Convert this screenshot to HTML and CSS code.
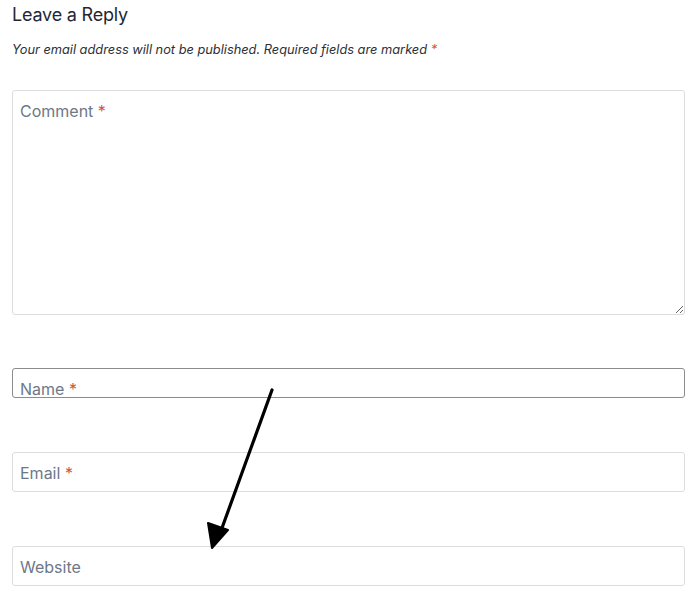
FILE: index.html
```html
<!DOCTYPE html>
<html lang="en">

<head>
    <meta charset="UTF-8">
    <meta name="viewport" content="width=device-width, initial-scale=1.0">
    <title>Leave a Reply</title>
    <link rel="stylesheet" href="styles.css">
</head>

<body>

    <div class="reply-container">
        <h3>Leave a Reply</h3>
        <p class="notes">Your email address will not be published. Required fields are marked <span class="required">*</span></p>
        <form id="commentForm">
            <div class="form-group comment-group">
                <textarea id="comment" name="comment"></textarea>
                <span class="hint">Comment <span class="required">*</span></span>
            </div>
            <div class="form-group name-group">
                <input type="text" id="author" name="author">
                <span class="hint">Name <span class="required">*</span></span>
            </div>
            <div class="form-group">
                <input type="email" id="email" name="email">
                <span class="hint">Email <span class="required">*</span></span>
            </div>
            <div class="form-group">
                <input type="url" id="url" name="url">
                <span class="hint">Website</span>
            </div>
        </form>

        <svg class="arrow" width="120" height="200" viewBox="0 0 120 200">
            <line x1="92" y1="22" x2="42" y2="160" stroke="#000" stroke-width="3.2" stroke-linecap="round" />
            <polygon points="32,180 28,155 48,162" fill="#000" stroke="#000" stroke-width="2" stroke-linejoin="round" />
        </svg>
    </div>

</body>

</html>
```

FILE: styles.css
```css
:root {
    --text-color: #1f2733;
    --hint-color: #6c7889;
    --border-color: #dddddd;
    --required-color: #d2553a;
}

body {
    margin: 0;
    font-family: Inter, "Liberation Sans", sans-serif;
    color: var(--text-color);
    background-color: #fff;
}

.reply-container {
    position: relative;
    padding: 0 15px 0 12px;
}

.reply-container h3 {
    margin: 0;
    padding-top: 4px;
    font-size: 18px;
    font-weight: 400;
    line-height: 22px;
    letter-spacing: -0.2px;
}

.notes {
    margin: 15px 0 31px;
    font-size: 12.8px;
    font-style: italic;
    line-height: 18px;
    color: #2b2f36;
}

.required {
    color: var(--required-color);
}

.form-group {
    position: relative;
    margin-bottom: 54px;
}

.form-group:last-child {
    margin-bottom: 0;
}

.form-group input,
.form-group textarea {
    display: block;
    width: 100%;
    height: 40px;
    box-sizing: border-box;
    margin: 0;
    padding: 8px;
    font-family: inherit;
    font-size: 16px;
    border: 1px solid var(--border-color);
    border-radius: 3px;
    background-color: #fff;
    outline: none;
}

.form-group textarea {
    height: 225px;
    resize: vertical;
}

.comment-group {
    margin-bottom: 53px;
}

.name-group input {
    height: 30px;
    border-color: #8c8c8c;
}

.hint {
    position: absolute;
    left: 8px;
    top: 11px;
    font-size: 16px;
    line-height: 20px;
    color: var(--hint-color);
    pointer-events: none;
}

.arrow {
    position: absolute;
    left: 180px;
    top: 368px;
}
```
